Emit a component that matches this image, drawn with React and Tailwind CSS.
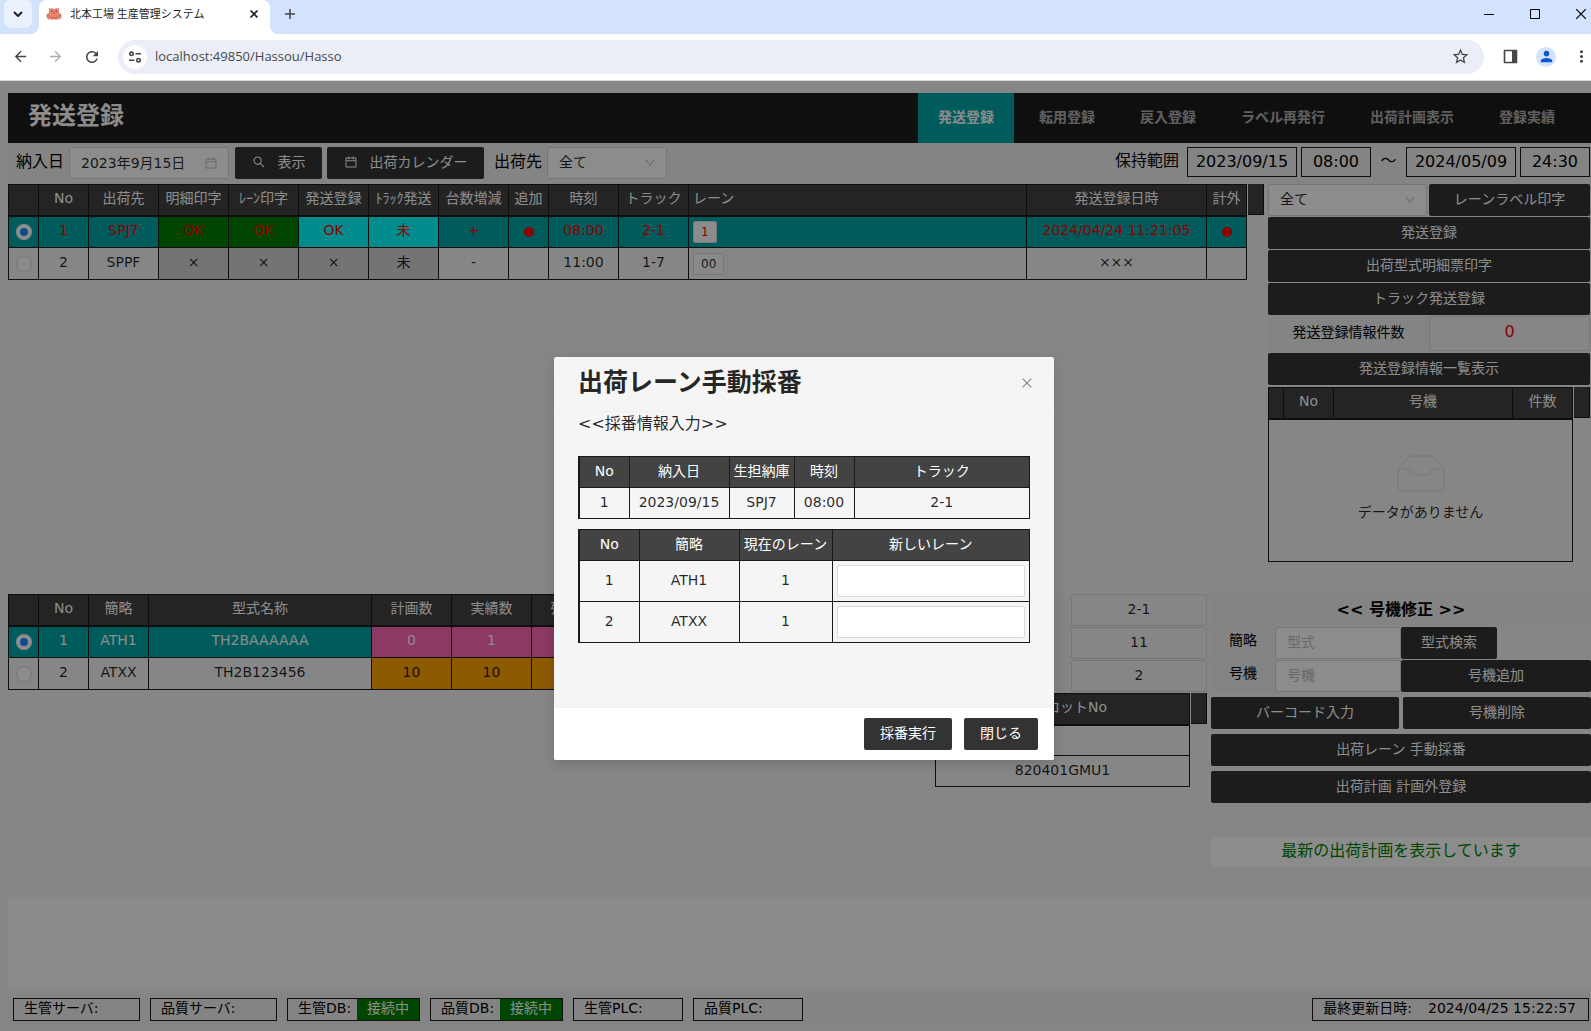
import { useState } from 'react';
import { AiOutlineCalendar, AiOutlineClose, AiOutlineDown, AiOutlineSearch } from 'react-icons/ai';
import { MdArrowBack, MdArrowForward, MdMoreVert, MdPerson, MdRefresh, MdStarOutline } from 'react-icons/md';

const NAV = ['発送登録', '転用登録', '戻入登録', 'ラベル再発行', '出荷計画表示', '登録実績'];

const SHIPMENT_COLUMNS = ['No', '出荷先', '明細印字', 'ﾚｰﾝ印字', '発送登録', 'ﾄﾗｯｸ発送', '台数増減', '追加', '時刻', 'トラック'];

const SHIPMENTS = [
  {
    no: 1, dest: 'SPJ7', detail: 'OK', lanePrint: 'OK', ship: 'OK', truckShip: '未', diff: '+', added: true,
    time: '08:00', truck: '2-1', lane: '1', shippedAt: '2024/04/24 11:21:05', outside: true,
  },
  {
    no: 2, dest: 'SPPF', detail: '×', lanePrint: '×', ship: '×', truckShip: '未', diff: '-', added: false,
    time: '11:00', truck: '1-7', lane: '00', shippedAt: '×××', outside: false,
  },
];

const MODELS = [
  { no: 1, short: 'ATH1', name: 'TH2BAAAAAA', plan: 0, actual: 1 },
  { no: 2, short: 'ATXX', name: 'TH2B123456', plan: 10, actual: 10 },
];

const SERVERS = [
  { label: '生管サーバ:', width: 'w-[127px]' },
  { label: '品質サーバ:', width: 'w-[127px]' },
  { label: '生管DB:', width: 'w-[133px]', status: '接続中' },
  { label: '品質DB:', width: 'w-[133px]', status: '接続中' },
  { label: '生管PLC:', width: 'w-[110px]' },
  { label: '品質PLC:', width: 'w-[110px]' },
];

const TH = 'border border-b-2 border-[#1a1a1a] bg-[#434343] p-0 pb-[3px] font-normal text-white';
const MODAL_TH = 'border border-[#1a1a1a] bg-[#434343] p-0 pb-[3px] font-normal text-white';
const TD = 'border border-[#1a1a1a] p-0 pb-[3px]';
// cells that hold a control or a mark instead of text
const TD_MARK = 'border border-[#1a1a1a] p-0';

function DarkButton({ className = '', children, ...rest }) {
  return (
    <button type="button" className={`h-8 rounded-xs bg-[#333] pb-[3px] text-white cursor-pointer ${className}`} {...rest}>
      {children}
    </button>
  );
}

function Select({ id, label, className }) {
  return (
    <div className={`relative ${className}`}>
      <select id={id} aria-label={label} className="h-8 w-full appearance-none rounded-xs border border-[#d9d9d9] bg-white pb-[3px] pl-[11px] text-black/85">
        <option>全て</option>
      </select>
      <AiOutlineDown size={12} className="pointer-events-none absolute right-[11px] top-[10px] text-black/25" />
    </div>
  );
}

function Radio({ name, label, checked, onChange }) {
  return (
    <input
      type="radio"
      name={name}
      aria-label={label}
      checked={checked}
      onChange={onChange}
      className="block mx-auto size-4 appearance-none rounded-full border border-[#d9d9d9] bg-white checked:border-4 checked:border-white checked:bg-[#1890ff]"
    />
  );
}

// header filler above the vertical scrollbar
function ScrollCell() {
  return <div className="ml-px h-[31px] w-4 flex-shrink-0 border-b border-r border-[#1a1a1a] bg-[#434343]" />;
}

function Dot() {
  return <span className="mx-auto block size-[10px] rounded-full bg-[#ff0000]" />;
}

function Favicon() {
  return (
    <svg width="16" height="16" viewBox="0 0 16 16">
      <path d="M3.200 4.500 2.800 1.800 4.600 2.800 5.800 1.800 6.800 2.900h2.400l1-1.100 1.200 1 1.800-1-.4 2.700c.4.800.4 1.700.2 2.500 1.500.3 2.700 1.400 2.700 2.900 0 1.200-.7 1.900-1.300 2l.3 1.300-2 .3-1-.7-.5 1H9.500L8 13l-1.500.8H4.800l-.5-1-1 .7-2-.3.3-1.300c-.6-.1-1.300-.8-1.300-2 0-1.500 1.200-2.600 2.700-2.900-.2-.8-.2-1.700.2-2.500z" fill="#e8836f" />
      <path d="M1.400 9.200l2 1M14.600 9.200l-2 1M4.500 11.200c2 .9 5 .9 7 0" stroke="#b9604f" strokeWidth=".8" fill="none" />
      <circle cx="5.800" cy="5.300" r=".7" fill="#5a2d27" />
      <circle cx="10.200" cy="5.300" r=".7" fill="#5a2d27" />
      <path d="M7 6.800h2L8 7.900z" fill="#8f4337" />
    </svg>
  );
}

function BrowserBar() {
  return (
    <div className="font-['Open_Sans','Noto_Sans_CJK_JP',sans-serif] text-[#1f1f1f]">
      <div className="flex h-[34px] items-start justify-between bg-[#d3e3fd]">
        <div className="flex">
          <button type="button" aria-label="タブを検索" className="ml-1 flex h-7 w-7 items-center justify-center rounded-b-lg rounded-t-md bg-[#ebf2fe]">
            <svg width="10" height="6" viewBox="0 0 10 6"><path d="M1 1l4 4 4-4" fill="none" stroke="#1f1f1f" strokeWidth="2" /></svg>
          </button>
          <svg className="mt-[26px] -ml-px" width="8" height="8" viewBox="0 0 8 8"><path d="M8 0v8H0a8 8 0 0 0 8-8z" fill="#fff" /></svg>
          <div className="flex h-[34px] w-[231px] items-center rounded-t-lg bg-white pb-1.5 pl-[7px] pr-2.5">
            <Favicon />
            <span className="ml-2 flex-1 whitespace-nowrap text-[11px]">北本工場 生産管理システム</span>
            <button type="button" aria-label="タブを閉じる">
              <svg width="12" height="12" viewBox="0 0 12 12"><path d="M2.500 2.500l7 7M9.500 2.500l-7 7" stroke="#1f1f1f" strokeWidth="1.700" /></svg>
            </button>
          </div>
          <svg className="mt-[26px]" width="8" height="8" viewBox="0 0 8 8"><path d="M0 0v8h8a8 8 0 0 1-8-8z" fill="#fff" /></svg>
          <button type="button" aria-label="新しいタブ" className="flex h-7 w-6 items-center justify-center">
            <svg width="12" height="12" viewBox="0 0 12 12"><path d="M6 1v10M1 6h10" stroke="#444746" strokeWidth="1.500" /></svg>
          </button>
        </div>
        <div className="flex h-7 items-center gap-9 pr-[5px]">
          <button type="button" aria-label="最小化">
            <svg className="block" width="10" height="10" viewBox="0 0 10 10"><path d="M0 5.500h10" stroke="#000" /></svg>
          </button>
          <button type="button" aria-label="最大化">
            <svg className="block" width="10" height="10" viewBox="0 0 10 10"><path d="M.5.5h9v9h-9z" fill="none" stroke="#000" /></svg>
          </button>
          <button type="button" aria-label="閉じる">
            <svg className="block" width="10" height="10" viewBox="0 0 10 10"><path d="M0 0l10 10M10 0L0 10" stroke="#000" strokeWidth="1.200" /></svg>
          </button>
        </div>
      </div>

      <div className="flex h-[47px] items-center border-b border-[#d5d8dc] bg-white pb-px pl-3">
        <button type="button" aria-label="戻る"><MdArrowBack size={17} color="#444746" /></button>
        <button type="button" aria-label="進む" className="ml-[18px]"><MdArrowForward size={17} color="#b0b1b1" /></button>
        <button type="button" aria-label="再読み込み" className="ml-[19px]"><MdRefresh size={18} color="#444746" /></button>
        <div className="ml-[17px] flex h-[34px] flex-1 items-center rounded-full bg-[#ebeef7] pl-[5px] pr-3.5">
          <span className="flex size-6 items-center justify-center rounded-full bg-white">
            <svg width="14" height="14" viewBox="0 0 14 14" fill="none" stroke="#444746" strokeWidth="1.600">
              <circle cx="3.500" cy="3.800" r="1.700" />
              <path d="M7.500 3.800H13M1 10.200h5.500" />
              <circle cx="10.500" cy="10.200" r="1.700" />
            </svg>
          </span>
          <input aria-label="アドレス" defaultValue="localhost:49850/Hassou/Hasso" className="ml-2 min-w-0 flex-1 bg-transparent text-[13px] text-[#45484c]" />
          <button type="button" aria-label="ブックマーク"><MdStarOutline size={19} color="#444746" /></button>
        </div>
        <button type="button" aria-label="サイドパネル" className="ml-[19px]">
          <svg width="15" height="15" viewBox="0 0 15 15"><path d="M1.500 1.500h12v12h-12z" fill="none" stroke="#444746" strokeWidth="1.600" strokeLinejoin="round" /><path d="M9 1.500h4.500v12H9z" fill="#444746" /></svg>
        </button>
        <button type="button" aria-label="プロフィール" className="ml-[18px] flex size-5 items-center justify-center rounded-full bg-[#d3e3fd]">
          <MdPerson size={17} color="#0b57d0" />
        </button>
        <button type="button" aria-label="メニュー" className="ml-4"><MdMoreVert size={19} color="#444746" /></button>
      </div>
    </div>
  );
}

function ShipmentTable() {
  const [selected, setSelected] = useState(1);
  const printed = (v) => (v === 'OK' ? 'bg-[#008000]' : 'bg-[#d3d3d3]');
  const shipped = (v) => (v === 'OK' ? 'bg-[#00ffff]' : 'bg-[#d3d3d3]');

  return (
    <div className="flex min-w-0 flex-1 items-start">
      <table className="w-full table-fixed border-collapse text-center">
        <colgroup>
          <col className="w-[30px]" />
          <col className="w-[50px]" />
          <col className="w-[70px]" span={6} />
          <col className="w-10" />
          <col className="w-[70px]" span={2} />
          <col />
          <col className="w-[180px]" />
          <col className="w-10" />
        </colgroup>
        <thead>
          <tr className="h-[31px] whitespace-nowrap">
            <th className={TH} />
            {SHIPMENT_COLUMNS.map((h) => <th key={h} className={TH}>{h}</th>)}
            <th className={`${TH} pl-1 text-left`}>レーン</th>
            <th className={TH}>発送登録日時</th>
            <th className={TH}>計外</th>
          </tr>
        </thead>
        <tbody>
          {SHIPMENTS.map((s) => {
            const on = selected === s.no;
            return (
              <tr key={s.no} className={`h-8 ${on ? 'bg-[#00a8a8] text-[#ff0000]' : ''}`}>
                <td className={TD_MARK}>
                  <Radio name="shipment" label={`出荷先 ${s.dest}`} checked={on} onChange={() => setSelected(s.no)} />
                </td>
                <td className={TD}>{s.no}</td>
                <td className={TD}>{s.dest}</td>
                <td className={`${TD} ${printed(s.detail)}`}>{s.detail}</td>
                <td className={`${TD} ${printed(s.lanePrint)}`}>{s.lanePrint}</td>
                <td className={`${TD} ${shipped(s.ship)}`}>{s.ship}</td>
                <td className={`${TD} ${shipped(s.ship)}`}>{s.truckShip}</td>
                <td className={TD}>{s.diff}</td>
                <td className={TD_MARK}>{s.added && <Dot />}</td>
                <td className={TD}>{s.time}</td>
                <td className={TD}>{s.truck}</td>
                <td className={`${TD_MARK} pl-1 text-left`}>
                  <span className={`block w-fit rounded-xs border border-[#d9d9d9] px-[7px] text-xs leading-5 ${on ? 'bg-white' : 'bg-[#fafafa]'}`}>{s.lane}</span>
                </td>
                <td className={TD}>{s.shippedAt}</td>
                <td className={TD_MARK}>{s.outside && <Dot />}</td>
              </tr>
            );
          })}
        </tbody>
      </table>
      <ScrollCell />
    </div>
  );
}

function SidePanel() {
  return (
    <div className="w-[322px] flex-shrink-0">
      <div className="flex gap-0.5">
        <Select id="lane" label="レーン" className="w-[159px]" />
        <DarkButton className="flex-1">レーンラベル印字</DarkButton>
      </div>
      <div className="mt-px flex flex-col gap-px">
        <DarkButton>発送登録</DarkButton>
        <DarkButton>出荷型式明細票印字</DarkButton>
        <DarkButton>トラック発送登録</DarkButton>
      </div>
      <div className="mb-0.5 mt-px flex h-[35px]">
        <div className="flex w-[161px] items-center justify-center bg-[#f0f0f0] pb-[3px] text-black">発送登録情報件数</div>
        <div className="flex flex-1 items-center justify-center rounded-xs border border-[#d9d9d9] pb-[3px] text-base text-[#ff0000]">0</div>
      </div>
      <DarkButton className="w-full">発送登録情報一覧表示</DarkButton>
      <div className="mt-0.5 flex items-start">
        <table className="w-full table-fixed border-collapse text-center">
          <colgroup>
            <col className="w-[15px]" />
            <col className="w-[50px]" />
            <col />
            <col className="w-[60px]" />
          </colgroup>
          <thead>
            <tr className="h-[31px]">
              <th className={TH} />
              <th className={TH}>No</th>
              <th className={TH}>号機</th>
              <th className={TH}>件数</th>
            </tr>
          </thead>
          <tbody>
            <tr className="h-[143px]">
              <td colSpan={4} className={TD}>
                <svg className="mx-auto mb-1.5" width="64" height="41" viewBox="0 0 64 41">
                  <g transform="translate(0 1)" fill="none" stroke="#d9d9d9">
                    <path d="M55 12.760L44.854 1.258C44.367.474 43.656 0 42.907 0H21.093c-.749 0-1.460.474-1.947 1.257L9 12.761V22h46v-9.240z" />
                    <path d="M41.613 15.931c0-1.605.994-2.930 2.227-2.931H55v18.137C55 33.260 53.680 35 52.050 35h-40.100C10.320 35 9 33.259 9 31.137V13h11.160c1.233 0 2.227 1.323 2.227 2.928v.022c0 1.605 1.005 2.901 2.237 2.901h14.752c1.232 0 2.237-1.308 2.237-2.913v-.007z" fill="#f5f5f5" />
                  </g>
                </svg>
                データがありません
              </td>
            </tr>
          </tbody>
        </table>
        <ScrollCell />
      </div>
    </div>
  );
}

function ModelTable() {
  const [selected, setSelected] = useState(1);

  return (
    <div className="flex min-w-0 flex-1 items-start">
      <table className="w-[604px] table-fixed border-collapse text-center">
        <colgroup>
          <col className="w-[30px]" />
          <col className="w-[50px]" />
          <col className="w-[60px]" />
          <col />
          <col className="w-20" span={3} />
        </colgroup>
        <thead>
          <tr className="h-[31px]">
            <th className={TH} />
            {['No', '簡略', '型式名称', '計画数', '実績数', '残台数'].map((h) => <th key={h} className={TH}>{h}</th>)}
          </tr>
        </thead>
        <tbody>
          {MODELS.map((m) => {
            const on = selected === m.no;
            const count = m.plan === m.actual ? 'bg-[#ffa500]' : 'bg-[#ff69b4]';
            return (
              <tr key={m.no} className={`h-8 ${on ? 'bg-[#00a8a8] text-white' : ''}`}>
                <td className={TD_MARK}>
                  <Radio name="model" label={`簡略 ${m.short}`} checked={on} onChange={() => setSelected(m.no)} />
                </td>
                <td className={TD}>{m.no}</td>
                <td className={TD}>{m.short}</td>
                <td className={TD}>{m.name}</td>
                <td className={`${TD} ${count}`}>{m.plan}</td>
                <td className={`${TD} ${count}`}>{m.actual}</td>
                <td className={`${TD} ${count}`}>{m.plan - m.actual}</td>
              </tr>
            );
          })}
        </tbody>
      </table>
    </div>
  );
}

function LotPanel() {
  return (
    <div className="w-[272px] flex-shrink-0">
      {[['トラック', '2-1'], ['計画数', '11'], ['実績数', '2']].map(([label, value]) => (
        <div key={label} className="mb-px flex h-8">
          <div className="flex flex-1 items-center justify-center bg-[#f0f0f0]">{label}</div>
          <div className="flex w-[136px] items-center justify-center rounded-xs border border-[#d9d9d9] pb-[3px]">{value}</div>
        </div>
      ))}
      <div className="flex items-start">
        <table className="w-full table-fixed border-collapse text-center">
          <thead>
            <tr className="h-[31px]"><th className={TH}>製造ロットNo</th></tr>
          </thead>
          <tbody>
            <tr className="h-[31px]"><td className={TD} /></tr>
            <tr className="h-[31px]"><td className={TD}>820401GMU1</td></tr>
          </tbody>
        </table>
        <ScrollCell />
      </div>
    </div>
  );
}

function UnitPanel() {
  const input = 'h-8 w-[126px] rounded-xs border border-[#d9d9d9] bg-white px-[11px] pb-[3px] placeholder:text-[#bfbfbf]';
  return (
    <div className="w-[380px] flex-shrink-0">
      <h2 className="h-8 bg-[#f0f0f0] text-center text-base font-bold leading-8 text-black">&lt;&lt; 号機修正 &gt;&gt;</h2>
      <div className="mt-px flex flex-col gap-px">
        <div className="flex h-8">
          <label htmlFor="model" className="w-16 bg-[#f0f0f0] text-center leading-[26px] text-black">簡略</label>
          <input id="model" placeholder="型式" className={input} />
          <DarkButton className="w-24">型式検索</DarkButton>
        </div>
        <div className="flex h-8">
          <label htmlFor="unit" className="w-16 bg-[#f0f0f0] text-center leading-[26px] text-black">号機</label>
          <input id="unit" placeholder="号機" className={input} />
          <DarkButton className="flex-1">号機追加</DarkButton>
        </div>
      </div>
      <div className="mt-[5px] flex flex-col gap-[5px]">
        <div className="flex gap-1">
          <DarkButton className="flex-1">バーコード入力</DarkButton>
          <DarkButton className="flex-1">号機削除</DarkButton>
        </div>
        <DarkButton>出荷レーン 手動採番</DarkButton>
        <DarkButton>出荷計画 計画外登録</DarkButton>
      </div>
      <p className="mt-[34px] h-[30px] bg-white text-center text-base leading-7 text-[#008000]">最新の出荷計画を表示しています</p>
    </div>
  );
}

function LaneModal({ onClose }) {
  return (
    <div className="absolute inset-0 z-10 flex items-start justify-center bg-black/45 pl-[17px] pt-[276px]">
      <div role="dialog" aria-labelledby="lane-title" className="w-[500px] overflow-hidden rounded-xs bg-[#f5f5f5] shadow-[0_4px_12px_rgba(0,0,0,0.15)]">
        <div className="flex h-[55px] items-start justify-between border-b border-[#f0f0f0] pl-6 pr-5">
          <h2 id="lane-title" className="text-[25px] font-bold leading-[52px]">出荷レーン手動採番</h2>
          <button type="button" aria-label="閉じる" onClick={onClose} className="mt-[19px] text-black/45">
            <AiOutlineClose size={14} />
          </button>
        </div>

        <div className="h-[295px] px-6">
          <p className="mb-5 text-base leading-6">&lt;&lt;採番情報入力&gt;&gt;</p>
          <table className="w-full table-fixed border-collapse border-l-2 border-[#1a1a1a] text-center">
            <colgroup>
              <col className="w-[50px]" />
              <col className="w-[100px]" />
              <col className="w-[65px]" />
              <col className="w-[60px]" />
              <col />
            </colgroup>
            <thead>
              <tr className="h-[31px] whitespace-nowrap">
                {['No', '納入日', '生担納庫', '時刻', 'トラック'].map((h) => <th key={h} className={MODAL_TH}>{h}</th>)}
              </tr>
            </thead>
            <tbody>
              <tr className="h-[31px]">
                {['1', '2023/09/15', 'SPJ7', '08:00', '2-1'].map((v) => <td key={v} className={TD}>{v}</td>)}
              </tr>
            </tbody>
          </table>

          <table className="mt-2.5 w-full table-fixed border-collapse border-l-2 border-[#1a1a1a] text-center">
            <colgroup>
              <col className="w-[60px]" />
              <col className="w-[100px]" />
              <col className="w-[93px]" />
              <col />
            </colgroup>
            <thead>
              <tr className="h-[31px] whitespace-nowrap">
                {['No', '簡略', '現在のレーン', '新しいレーン'].map((h) => <th key={h} className={MODAL_TH}>{h}</th>)}
              </tr>
            </thead>
            <tbody>
              {MODELS.map((m) => (
                <tr key={m.no} className="h-[41px]">
                  <td className={TD}>{m.no}</td>
                  <td className={TD}>{m.short}</td>
                  <td className={TD}>1</td>
                  <td className={`${TD_MARK} px-1`}>
                    <input aria-label={`${m.short} 新しいレーン`} className="block h-8 w-full rounded-xs border border-[#d9d9d9] bg-white px-[11px]" />
                  </td>
                </tr>
              ))}
            </tbody>
          </table>
        </div>

        <div className="flex justify-end gap-3 border-t border-[#f0f0f0] bg-white px-4 py-2.5">
          <DarkButton className="w-[88px]">採番実行</DarkButton>
          <DarkButton className="w-[74px]" onClick={onClose}>閉じる</DarkButton>
        </div>
      </div>
    </div>
  );
}

export default function App() {
  const [open, setOpen] = useState(true);

  return (
    <div className="flex min-h-screen flex-col">
      <BrowserBar />
      <div className="relative flex flex-1 flex-col bg-[#f5f5f5] pl-2 pt-3 font-['DejaVu_Sans','Noto_Sans_CJK_JP',sans-serif] text-sm text-black/85">
        <header className="flex h-[50px] items-stretch justify-between bg-[#1c1c1c] pl-5 pr-4">
          <h1 className="text-2xl font-bold leading-[46px] text-white">発送登録</h1>
          <nav className="flex gap-[5px]">
            {NAV.map((n, i) => (
              <a key={n} href="#" className={`px-5 font-bold leading-[48px] ${i === 0 ? 'bg-[#00a8a8] text-white' : 'text-white/65'}`}>{n}</a>
            ))}
          </nav>
        </header>

        <div className="flex h-[41px] items-start justify-between bg-[#f0f0f0] pl-2 pr-px pt-1">
          <div className="flex">
            <label htmlFor="date" className="text-base leading-[30px] text-black">納入日</label>
            <div className="relative ml-[5px] w-40">
              <input id="date" defaultValue="2023年9月15日" className="h-8 w-full rounded-xs border border-[#d9d9d9] bg-white px-[11px] pb-[3px]" />
              <AiOutlineCalendar size={14} className="pointer-events-none absolute right-[11px] top-[9px] text-black/25" />
            </div>
            <DarkButton className="ml-1.5 flex w-[87px] items-center justify-center gap-3"><AiOutlineSearch size={14} />表示</DarkButton>
            <DarkButton className="ml-[5px] flex w-[157px] items-center justify-center gap-3"><AiOutlineCalendar size={14} />出荷カレンダー</DarkButton>
            <label htmlFor="dest" className="ml-2.5 text-base leading-[30px] text-black">出荷先</label>
            <Select id="dest" label="出荷先" className="ml-[5px] w-[120px]" />
          </div>
          <div className="flex gap-1 text-center text-base leading-7 text-black">
            <span className="mr-1">保持範囲</span>
            <span className="w-[110px] border border-[#1a1a1a]">2023/09/15</span>
            <span className="w-[70px] border border-[#1a1a1a]">08:00</span>
            <span className="w-[27px]">～</span>
            <span className="w-[110px] border border-[#1a1a1a]">2024/05/09</span>
            <span className="w-[70px] border border-[#1a1a1a]">24:30</span>
          </div>
        </div>

        <main className="flex flex-1 flex-col">
          <section className="flex min-h-[410px] flex-1 items-start gap-1 pr-px">
            <ShipmentTable />
            <SidePanel />
          </section>
          <section className="flex min-h-[303px] items-start gap-1">
            <ModelTable />
            <LotPanel />
            <UnitPanel />
          </section>
          <div className="divide-y divide-[#f5f5f5] bg-[#fdfdfd]">
            <div className="h-[30px]" />
            <div className="h-[31px]" />
            <div className="h-[31px]" />
          </div>
        </main>

        <footer className="mb-[7px] mt-[5px] flex h-[30px] items-center justify-between bg-[#f0f0f0] pl-[5px] pr-0.5 text-black">
          <div className="flex gap-2.5">
            {SERVERS.map((s) => (
              <div key={s.label} className={`flex h-[23px] justify-between border border-[#1a1a1a] pl-2.5 leading-[19px] whitespace-nowrap ${s.width}`}>
                <span>{s.label}</span>
                {s.status && <span className="bg-[#008000] px-2.5 text-white">{s.status}</span>}
              </div>
            ))}
          </div>
          <div className="flex h-[23px] gap-4 border border-[#1a1a1a] pl-2.5 pr-3 leading-[19px] whitespace-nowrap">
            <span>最終更新日時:</span>
            <span>2024/04/25 15:22:57</span>
          </div>
        </footer>

        {open && <LaneModal onClose={() => setOpen(false)} />}
      </div>
    </div>
  );
}
